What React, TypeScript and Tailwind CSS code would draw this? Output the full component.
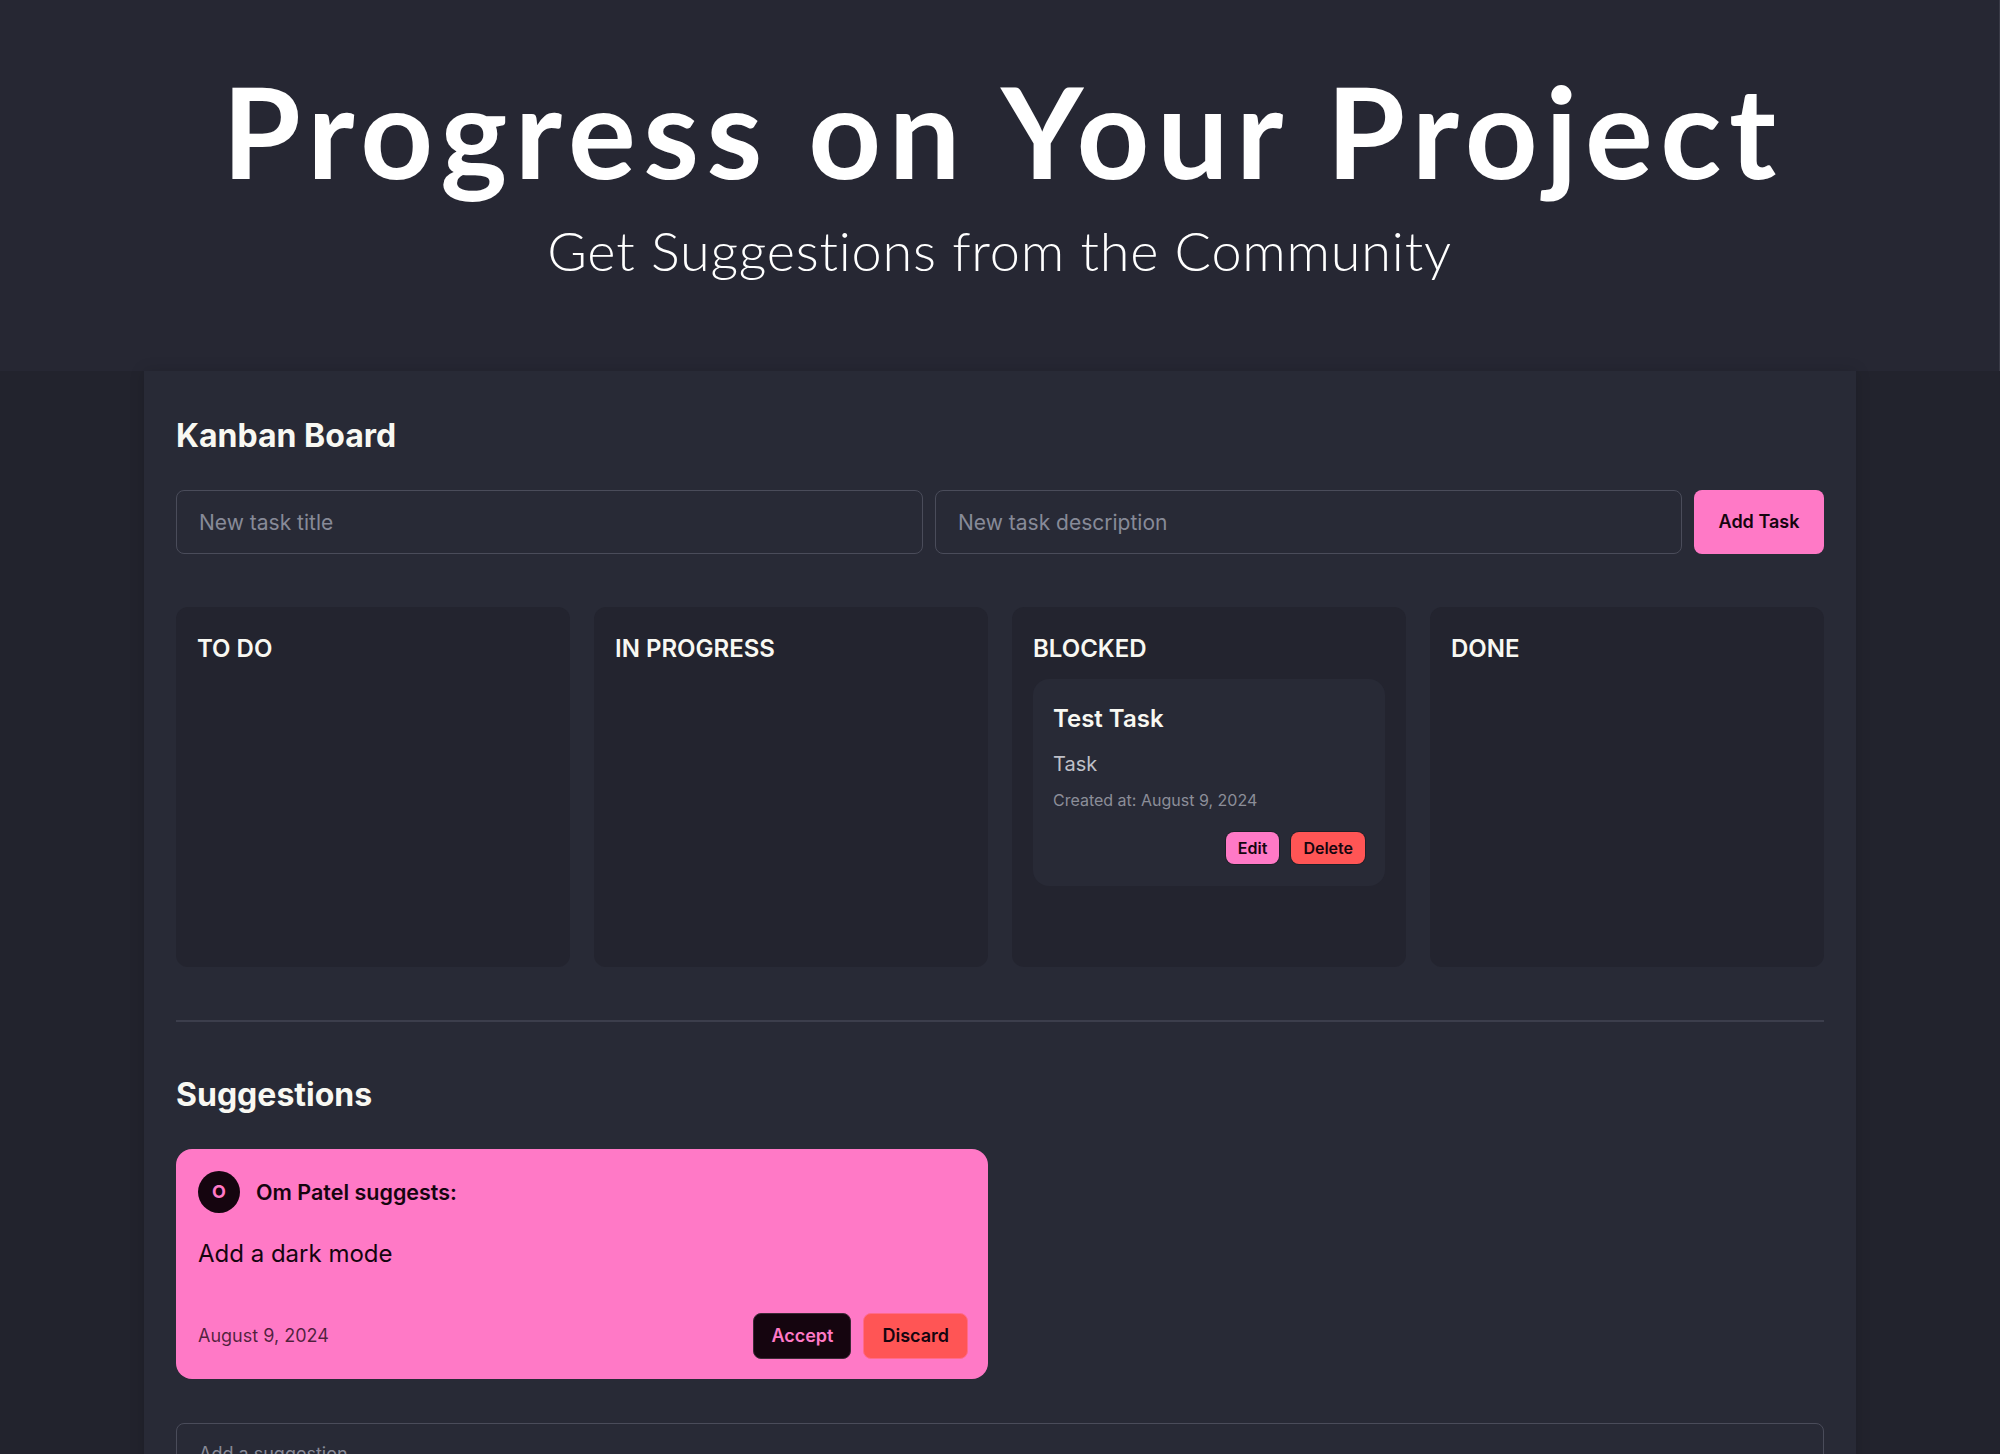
import React from "react";

const columns = ["TO DO", "IN PROGRESS", "BLOCKED", "DONE"];

function TaskCard() {
  return (
    <div className="rounded-2xl bg-[#282a36] px-5 pt-6 pb-[22px]">
      <h4 className="text-2xl leading-8 font-semibold text-[#f8f8f2]">Test Task</h4>
      <p className="mt-[15px] text-xl leading-7 text-[#bfc0c8]">Task</p>
      <p className="mt-[10px] text-base leading-6 text-[#8c8e99]">Created at: August 9, 2024</p>
      <div className="mt-[20px] flex justify-end gap-3">
        <button className="rounded-lg bg-[#ff79c6] px-3 py-1 text-base leading-6 font-semibold text-[#15050f] shadow-[0_0_0_1px_rgba(0,0,0,0.25)]">
          Edit
        </button>
        <button className="rounded-lg bg-[#ff5555] px-3 py-1 text-base leading-6 font-semibold text-[#15050f] shadow-[0_0_0_1px_rgba(0,0,0,0.25)]">
          Delete
        </button>
      </div>
    </div>
  );
}

export default function App() {
  return (
    <div
      className="min-h-screen bg-[#22232d] text-[#f8f8f2]"
      style={{ fontFamily: "Inter, 'Noto Sans', sans-serif" }}
    >
      <header className="flex h-[371px] flex-col items-center border-r border-[#3a3b47] bg-[#262733] pt-[67px]">
        <h1
          className="pl-[7px] text-[127px] leading-none font-bold tracking-[7.5px] text-white"
          style={{ fontFamily: "Lato, 'Open Sans', sans-serif" }}
        >
          Progress on Your Project
        </h1>
        <p
          className="mt-[30px] text-[54px] leading-none font-light tracking-[0.8px] text-white"
          style={{ fontFamily: "Lato, 'Open Sans', sans-serif" }}
        >
          Get Suggestions from the Community
        </p>
      </header>

      <main className="mx-auto w-[1712px] bg-[#282a36] px-8 pt-[45px] pb-16 shadow-[0_0_14px_rgba(0,0,0,0.15)]">
        <h2 className="text-[32px] leading-10 font-bold text-[#f8f8f2]">Kanban Board</h2>

        <div className="mt-[34px] flex gap-3">
          <input
            className="h-16 flex-1 rounded-lg border border-[#4a4c5a] bg-transparent px-[22px] text-[21px] text-[#f8f8f2] outline-none placeholder:text-[#878a98]"
            placeholder="New task title"
          />
          <input
            className="h-16 flex-1 rounded-lg border border-[#4a4c5a] bg-transparent px-[22px] text-[21px] text-[#f8f8f2] outline-none placeholder:text-[#878a98]"
            placeholder="New task description"
          />
          <button className="h-16 w-[130px] rounded-lg bg-[#ff79c6] text-lg font-semibold text-[#15050f]">
            Add Task
          </button>
        </div>

        <div className="mt-[53px] grid grid-cols-4 gap-6">
          {columns.map((c) => (
            <div key={c} className="h-[360px] rounded-xl bg-[#23242f] px-[21px] pt-[26px] pb-5">
              <h3 className="mb-[14px] text-2xl leading-8 font-semibold text-[#f8f8f2]">{c}</h3>
              {c === "BLOCKED" && <TaskCard />}
            </div>
          ))}
        </div>

        <div className="mt-[53px] h-[2px] bg-[#3c3e4c]" />

        <h2 className="mt-[53px] text-[32px] leading-10 font-bold text-[#f8f8f2]">Suggestions</h2>

        <div className="mt-[34px] grid grid-cols-2 gap-6">
          <div className="rounded-2xl bg-[#ff79c6] pt-[22px] pr-5 pb-5 pl-[22px] text-[#15050f]">
            <div className="flex items-center gap-4">
              <div className="flex h-[42px] w-[42px] items-center justify-center rounded-full bg-[#15050f] text-lg font-bold text-[#ff79c6]">
                O
              </div>
              <span className="text-[21.5px] leading-7 font-semibold">Om Patel suggests:</span>
            </div>
            <p className="mt-[25px] text-2xl leading-8">Add a dark mode</p>
            <div className="mt-[43px] flex items-center justify-between">
              <span className="text-lg leading-7 text-[#15050f]/75">August 9, 2024</span>
              <div className="flex gap-3">
                <button className="rounded-lg border border-[#3d2a37] bg-[#15050f] px-[17px] py-2 text-lg leading-7 font-semibold text-[#ff79c6]">
                  Accept
                </button>
                <button className="rounded-lg border border-[#ff6a8a] bg-[#ff5555] px-[18px] py-2 text-lg leading-7 font-semibold text-[#15050f]">
                  Discard
                </button>
              </div>
            </div>
          </div>
          <div />
        </div>

        <textarea
          rows={3}
          className="mt-[44px] block w-full resize-none rounded-lg border border-[#4a4c5a] bg-transparent px-[22px] py-4 text-lg leading-7 text-[#f8f8f2] outline-none placeholder:text-[#878a98]"
          placeholder="Add a suggestion"
        />
      </main>
    </div>
  );
}
